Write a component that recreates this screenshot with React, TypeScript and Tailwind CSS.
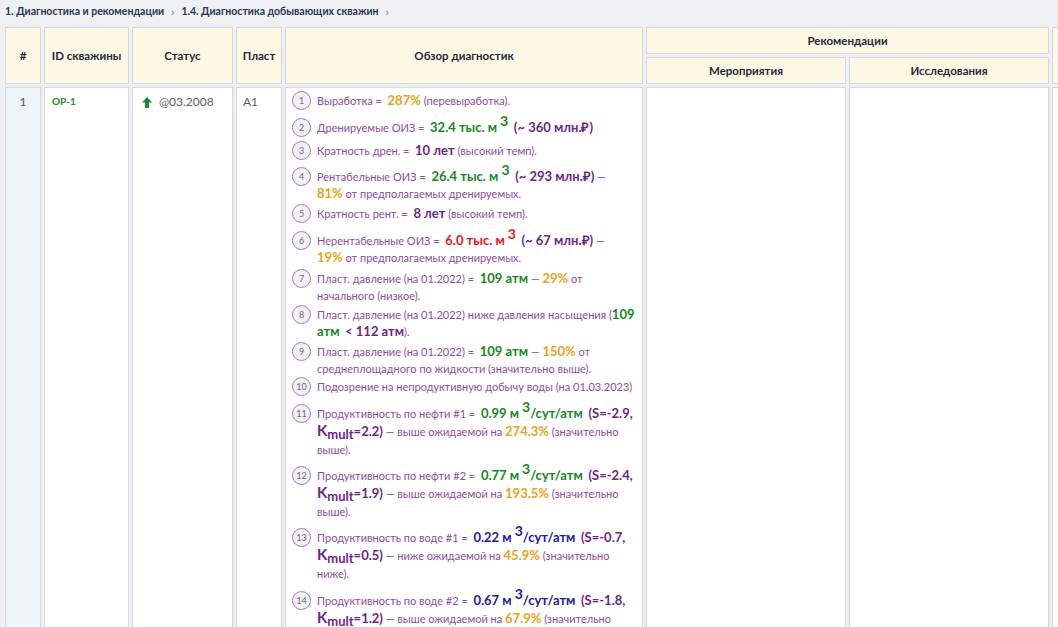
import React from "react";

type C = { children: React.ReactNode };
const P = ({ children }: C) => <span className="text-[#8e4c9e]">{children}</span>;
const G = ({ children }: C) => <span className="font-bold text-[13px] leading-[13px] text-[#15891b]">{children}</span>;
const O = ({ children }: C) => <span className="font-bold text-[13px] leading-[13px] text-[#eaa216]">{children}</span>;
const D = ({ children }: C) => <span className="font-bold text-[13px] leading-[13px] text-[#6d2489]">{children}</span>;
const R = ({ children }: C) => <span className="font-bold text-[13px] leading-[13px] text-[#e51616]">{children}</span>;
const B = ({ children }: C) => <span className="font-bold text-[13px] leading-[13px] text-[#1a1aa6]">{children}</span>;
const Sup = ({ c }: { c: string }) => <sup className={`text-[14px] font-bold ml-[3px] top-[-0.4em] ${c}`}>3</sup>;
const K = ({ v }: { v: string }) => (
  <span className="font-bold text-[#6d2489] leading-[13px]">
    <span className="text-[15px] leading-[13px]">K</span>
    <sub className="text-[13px]">mult</sub>
    <span className="text-[13px] leading-[13px]">={v})</span>
  </span>
);
const L = ({ children }: C) => <div className="whitespace-nowrap">{children}</div>;

type Item = { mt: number; lh: string; content: React.ReactNode };

const items: Item[] = [
  { mt: 0, lh: "leading-[17px]", content: <L><P>Выработка =&nbsp;</P> <O>287%</O><P> (перевыработка).</P></L> },
  { mt: 9, lh: "leading-[17px]", content: <L><P>Дренируемые ОИЗ =&nbsp;</P> <G>32.4 тыс. м</G><Sup c="text-[#15891b]" />&nbsp; <D>(~ 360 млн.₽)</D></L> },
  { mt: 5, lh: "leading-[17px]", content: <L><P>Кратность дрен. =&nbsp;</P> <D>10 лет</D> <P>(высокий темп).</P></L> },
  { mt: 8, lh: "leading-[17px]", content: <><L><P>Рентабельные ОИЗ =&nbsp;</P> <G>26.4 тыс. м</G><Sup c="text-[#15891b]" />&nbsp; <D>(~ 293 млн.₽)</D> <P>—</P></L><L><O>81%</O> <P>от предполагаемых дренируемых.</P></L></> },
  { mt: 3, lh: "leading-[17px]", content: <L><P>Кратность рент. =&nbsp;</P> <D>8 лет</D> <P>(высокий темп).</P></L> },
  { mt: 9, lh: "leading-[17px]", content: <><L><P>Нерентабельные ОИЗ =&nbsp;</P> <R>6.0 тыс. м</R><Sup c="text-[#e51616]" />&nbsp; <D>(~ 67 млн.₽)</D> <P>—</P></L><L><O>19%</O> <P>от предполагаемых дренируемых.</P></L></> },
  { mt: 4, lh: "leading-[17px]", content: <><L><P>Пласт. давление (на 01.2022) =&nbsp;</P> <G>109 атм</G> <P>—</P> <O>29%</O> <P>от</P></L><L><P>начального (низкое).</P></L></> },
  { mt: 2, lh: "leading-[17px]", content: <><L><P>Пласт. давление (на 01.2022) ниже давления насыщения (</P><G>109</G></L><L><G>атм</G>&nbsp; <D>&lt; 112 атм</D><P>).</P></L></> },
  { mt: 3, lh: "leading-[17px]", content: <><L><P>Пласт. давление (на 01.2022) =&nbsp;</P> <G>109 атм</G> <P>—</P> <O>150%</O> <P>от</P></L><L><P>среднеплощадного по жидкости (значительно выше).</P></L></> },
  { mt: 1, lh: "leading-[17px]", content: <L><P>Подозрение на непродуктивную добычу воды (на 01.03.2023)</P></L> },
  { mt: 9, lh: "leading-[18px]", content: <><L><P>Продуктивность по нефти #1 =&nbsp;</P> <G>0.99 м</G><Sup c="text-[#15891b]" /><G>/сут/атм</G>&nbsp; <D>(S=-2.9,</D></L><L><K v="2.2" /> <P>— выше ожидаемой на</P> <O>274.3%</O> <P>(значительно</P></L><L><P>выше).</P></L></> },
  { mt: 8, lh: "leading-[18px]", content: <><L><P>Продуктивность по нефти #2 =&nbsp;</P> <G>0.77 м</G><Sup c="text-[#15891b]" /><G>/сут/атм</G>&nbsp; <D>(S=-2.4,</D></L><L><K v="1.9" /> <P>— выше ожидаемой на</P> <O>193.5%</O> <P>(значительно</P></L><L><P>выше).</P></L></> },
  { mt: 8, lh: "leading-[18px]", content: <><L><P>Продуктивность по воде #1 =&nbsp;</P> <B>0.22 м</B><Sup c="text-[#1a1aa6]" /><B>/сут/атм</B>&nbsp; <D>(S=-0.7,</D></L><L><K v="0.5" /> <P>— ниже ожидаемой на</P> <O>45.9%</O> <P>(значительно</P></L><L><P>ниже).</P></L></> },
  { mt: 9, lh: "leading-[18px]", content: <><L><P>Продуктивность по воде #2 =&nbsp;</P> <B>0.67 м</B><Sup c="text-[#1a1aa6]" /><B>/сут/атм</B>&nbsp; <D>(S=-1.8,</D></L><L><K v="1.2" /> <P>— выше ожидаемой на</P> <O>67.9%</O> <P>(значительно</P></L><L><P>выше).</P></L></> },
];

const th = "border border-[#d3d7df] bg-[#fdf8e3] font-bold text-[11.5px] text-[#1f2a3c] text-center align-middle";
const td = "border border-[#d3d7df] bg-white align-top";

export default function App() {
  return (
    <div className="min-h-screen bg-[#eef0f4] text-[12px]" style={{ fontFamily: "Lato, 'Open Sans', sans-serif" }}>
      <div className="h-[24px] flex items-center pl-[5px] gap-[7px] font-bold text-[10.5px] text-[#2a3652]">
        <span>1. Диагностика и рекомендации</span>
        <span className="text-[#8a93a6] text-[11px]">›</span>
        <span>1.4. Диагностика добывающих скважин</span>
        <span className="text-[#8a93a6] text-[11px]">›</span>
      </div>
      <table className="table-fixed border-separate border-spacing-[3px] ml-[2px] w-[1153px]">
        <thead>
          <tr className="h-[27px]">
            <th rowSpan={2} className={`${th} w-[36px]`}>#</th>
            <th rowSpan={2} className={`${th} w-[85px]`}>ID скважины</th>
            <th rowSpan={2} className={`${th} w-[101px]`}>Статус</th>
            <th rowSpan={2} className={`${th} w-[46px]`}>Пласт</th>
            <th rowSpan={2} className={`${th} w-[358px]`}>Обзор диагностик</th>
            <th colSpan={2} className={th}>Рекомендации</th>
            <th rowSpan={2} className={`${th} w-[100px]`}></th>
          </tr>
          <tr className="h-[27px]">
            <th className={`${th} w-[198px]`}>Мероприятия</th>
            <th className={`${th} w-[202px]`}>Исследования</th>
          </tr>
        </thead>
        <tbody>
          <tr>
            <td className="border border-[#d3d7df] bg-[#eef4f7] align-top text-center pt-[5px] text-[12px] text-[#555b66]">1</td>
            <td className={`${td} pt-[6px] pl-[7px] font-bold text-[10px] text-[#1f8a2a]`}>ОР-1</td>
            <td className={`${td} pt-[5px] pl-[7px]`}>
              <div className="flex items-center gap-[6px] text-[12px] text-[#5a6070]">
                <svg width="12" height="13" viewBox="0 0 12 13" className="ml-[1px]">
                  <path d="M6 1 L11 6.5 L8 6.5 L8 12 L4 12 L4 6.5 L1 6.5 Z" fill="#1b8a2e" />
                </svg>
                <span>@03.2008</span>
              </div>
            </td>
            <td className={`${td} pt-[5px] pl-[6px] text-[12px] text-[#555b66]`}>А1</td>
            <td className={`${td} pt-[4px] pl-[6px] pr-[6px] pb-[20px]`}>
              {items.map((it, i) => (
                <div key={i} className={`flex ${it.lh}`} style={{ marginTop: it.mt }}>
                  <div className="w-[19px] h-[19px] -mt-[1px] shrink-0 rounded-full border-[1.5px] border-[#a47cbf] bg-[#f1f0f4] text-[9px] leading-none text-[#6b6b78] flex items-center justify-center">
                    {i + 1}
                  </div>
                  <div className="ml-[6px] text-[11px]">{it.content}</div>
                </div>
              ))}
            </td>
            <td className={td}></td>
            <td className={td}></td>
            <td className={td}></td>
          </tr>
        </tbody>
      </table>
    </div>
  );
}
